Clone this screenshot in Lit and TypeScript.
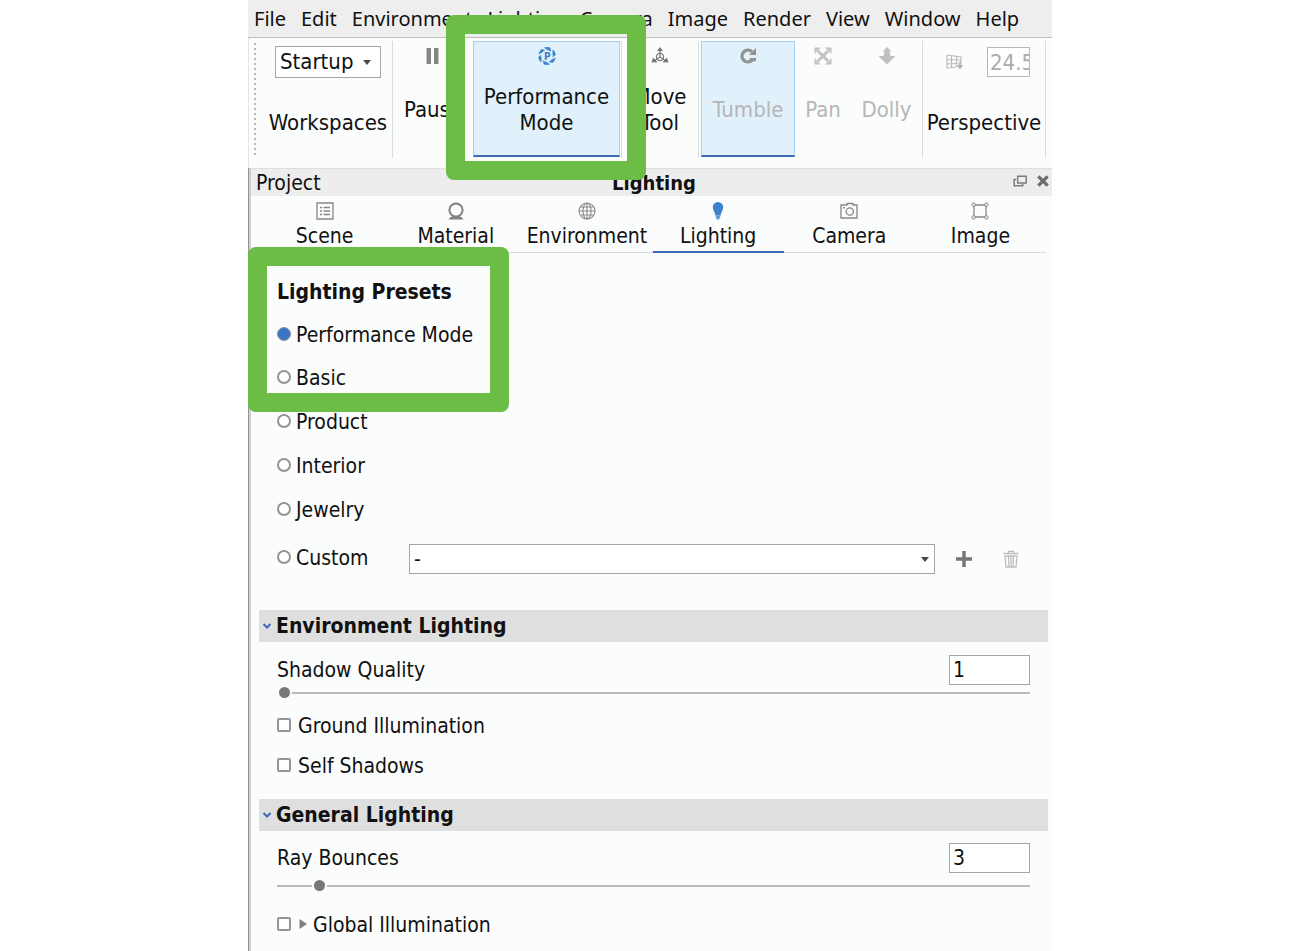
import { LitElement, html, css, svg, nothing } from "lit";
import { customElement, property, state } from "lit/decorators.js";

const icons: Record<string, unknown> = {
  pause: svg`<path d="M2.500 1h4.500v16H2.500zM10 1h4.500v16H10z" fill="#858585"/>`,
  performance: svg`
    ${[0, 60, 120, 180, 240, 300].map(
      (a) => svg`<path transform="rotate(${a} 9 9)" d="M5.960.64A8.900 8.900 0 0 1 12.400.8L13.200 4.900A5.800 5.800 0 0 0 9.700 3.200Z" fill="#3d85cd"/>`
    )}
    <text x="9.200" y="12.500" text-anchor="middle" font-size="10" font-weight="700" fill="#3d7cc6">P</text>`,
  move: svg`<g fill="none" stroke="#777" stroke-width="1.200">
      <circle cx="9" cy="10" r="3.600"/><path d="M9 3v7L3 14M9 10l6 4"/></g>
    <path d="M9 0l3 4H6zM.5 15.500L2 10.500l4.500 4.800zM17.500 15.500L16 10.500l-4.500 4.800z" fill="#777"/>`,
  tumble: svg`<path d="M13 4.700A5.900 5.900 0 1 0 13 13.300" fill="none" stroke="#929292" stroke-width="3.400"/>
    <path d="M17 1v7H10z" fill="#929292"/><path d="M10.500 11H17v3.200h-6z" fill="#929292"/>`,
  pan: svg`<path d="M4 4l10 10M14 4L4 14" stroke="#c4c4c4" stroke-width="3"/>
    <path d="M.5.5h6.500l-6.500 6.500zM17.500.5v6.500L11 .5zM.5 17.500V11L7 17.500zM17.500 17.500H11l6.500-6.500z" fill="#c4c4c4"/>`,
  dolly: svg`<path d="M9 0l4.500 4.500h-2l1 4.500H17.500L9 17.500.5 9H5.500l1-4.500h-2z" fill="#c0c0c0"/>`,
  grid: svg`<path d="M1 2l14 2v6M1 2v13l9-1M5.500 3v11.500M10.500 3.500v10M1 6.500l14 .5M1 11l11-.5" fill="none" stroke="#bbb" stroke-width="1.200"/>
    <path d="M10.500 12h7L14 16.500zM13 9h2v4h-2z" fill="#b5b5b5"/>`,
  float: svg`<path d="M6 3h11v8.500H6z M4 7H1.500v8h11v-2" fill="none" stroke="#7c7c7c" stroke-width="1.900"/>`,
  close: svg`<path d="M3 3l12 12M15 3L3 15" stroke="#6c6c6c" stroke-width="4.200"/>`,
  scene: svg`<path d="M1 1h16v16H1z" fill="none" stroke="#868686" stroke-width="1.300"/>
    <path d="M4 5.500h2M4 9h2M4 12.500h2M7.500 5.500H14M7.500 9H14M7.500 12.500H14" stroke="#868686" stroke-width="1.400"/>`,
  material: svg`<circle cx="9" cy="8" r="6.600" fill="none" stroke="#808080" stroke-width="2"/>
    <path d="M1.500 17.500q1-2.500 4-3.300h7q3 .8 4 3.300z" fill="#808080"/>`,
  environment: svg`<g fill="none" stroke="#8a8a8a" stroke-width="1.100">
    <circle cx="9" cy="9" r="8"/><ellipse cx="9" cy="9" rx="4" ry="8"/>
    <path d="M9 1v16M1 9h16M2.500 5h13M2.500 13h13"/></g>`,
  lighting: svg`<path d="M9 0a5.200 5.200 0 0 1 5.200 5.200c0 3-2.200 4.600-2.600 8.300H6.400C6 9.800 3.800 8.200 3.800 5.200A5.200 5.200 0 0 1 9 0z" fill="#3a80cb"/>
    <path d="M6.400 13.500h5.200L10.300 17.500H7.700z" fill="#5e9ad6"/>`,
  camera: svg`<g fill="none" stroke="#868686" stroke-width="1.300"><path d="M1 3h6V1.500h6V3h4v13H1z"/>
    <circle cx="9.800" cy="9.500" r="3.600"/></g><path d="M3 5h2v1.500H3z" fill="#868686"/>`,
  image: svg`<g fill="none" stroke="#868686" stroke-width="1.300"><path d="M3 3h12v12H3z"/></g>
    <g fill="#f4f4f4" stroke="#868686"><circle cx="2.600" cy="2.600" r="1.700"/><circle cx="15.400" cy="2.600" r="1.700"/>
    <circle cx="2.600" cy="15.400" r="1.700"/><circle cx="15.400" cy="15.400" r="1.700"/></g>`,
  add: svg`<path d="M9 1v16M1 9h16" stroke="#757575" stroke-width="3.400"/>`,
  trash: svg`<g fill="none" stroke="#bdbdbd" stroke-width="1.300"><path d="M1.500 3.500h15M6.500 3V1.300h5V3M3 6h12l-1 11H4zM6.500 6.500l.5 10M9 6.500v10M11.500 6.500l-.5 10"/></g>`,
  arrow: svg`<path d="M5 7h8l-4 5z" fill="#4a4a4a"/>`,
  chevron: svg`<path d="M5.500 7L9 10.500 12.500 7" fill="none" stroke="#3b68c0" stroke-width="2"/>`,
  expand: svg`<path d="M5.500 4l7.500 5-7.500 5z" fill="#808080"/>`,
};

const icon = (name: string) =>
  html`<svg class="icon" viewBox="0 0 18 18" width="18" height="18" aria-hidden="true">${icons[name]}</svg>`;

const base = css`
  * {
    box-sizing: border-box;
  }
  button,
  input,
  select {
    margin: 0;
    font: inherit;
    color: inherit;
    border-radius: 0;
  }
  button {
    padding: 0;
    border: 0;
    background: none;
  }
  .icon {
    display: block;
    flex: none;
  }
  .select {
    display: grid;
    align-items: center;
    background: #fff;
    border: 1px solid #a6a6a6;
  }
  .select select {
    grid-area: 1 / 1;
    width: 100%;
    height: 100%;
    padding: 0 20px 0 4px;
    appearance: none;
    border: 0;
    background: none;
  }
  .select .icon {
    grid-area: 1 / 1;
    justify-self: end;
    pointer-events: none;
  }
  .callout {
    position: absolute;
    z-index: 2;
    border: 19px solid #6bbd45;
    border-radius: 8px;
    pointer-events: none;
  }
`;

@customElement("tool-bar")
class ToolBar extends LitElement {
  static styles = [
    base,
    css`
      :host {
        display: flex;
        height: 130px;
        padding: 3px 0 10px;
        border-left: 1px solid #e4e4e4;
        font-size: 22px;
      }
      .grip {
        width: 2px;
        margin: 2px 0 2px 5px;
        background: repeating-linear-gradient(#b4b4b4 0 2px, transparent 2px 5px);
      }
      .group {
        display: flex;
        border-right: 1px solid #dcdcdc;
      }
      .stack {
        display: flex;
        flex-direction: column;
        align-items: center;
      }
      .fields {
        display: flex;
        align-items: center;
        height: 42px;
        gap: 23px;
      }
      .caption {
        flex: 1;
        display: flex;
        align-items: center;
        padding-top: 4px;
      }
      .workspaces {
        width: 136px;
        padding-left: 8px;
      }
      .startup {
        width: 106px;
        height: 32px;
      }
      .startup .icon {
        margin-right: 4px;
      }
      .tool {
        display: flex;
        flex-direction: column;
        align-items: center;
        height: 116px;
        padding-top: 5px;
        border: 1px solid transparent;
        border-bottom: 2px solid transparent;
      }
      .tool span {
        flex: 1;
        display: flex;
        align-items: center;
        justify-content: center;
      }
      .tool.on {
        background: #e0f1fc;
        border-color: #a5d0f0;
        border-bottom-color: #3f69b5;
      }
      .tool:disabled {
        color: #b6b6b6;
      }
      .pause {
        width: 80px;
      }
      .marked {
        position: relative;
        padding-right: 1px;
      }
      .marked .callout {
        inset: -26px -25px -22px -27px;
      }
      .performance {
        width: 147px;
      }
      .move {
        width: 76px;
      }
      .camera {
        padding-left: 2px;
      }
      .tumble {
        width: 94px;
      }
      .pan {
        width: 56px;
      }
      .dolly {
        width: 71px;
      }
      .perspective {
        width: 122px;
      }
      .perspective .fields {
        padding-left: 8px;
      }
      .angle {
        width: 43px;
        height: 30px;
        padding: 0 0 0 2px;
        border: 1px solid #b8b8b8;
        background: #fff;
        color: #ababab;
      }
    `,
  ];

  render() {
    return html`
      <div class="grip"></div>
      <div class="group">
        <div class="stack workspaces">
          <div class="fields">
            <div class="select startup">
              <select id="workspace"><option>Startup</option></select>
              ${icon("arrow")}
            </div>
          </div>
          <label class="caption" for="workspace">Workspaces</label>
        </div>
      </div>
      <button class="tool pause">${icon("pause")}<span>Pause</span></button>
      <div class="group marked">
        <button class="tool on performance" aria-pressed="true">
          ${icon("performance")}<span>Performance<br />Mode</span>
        </button>
        <div class="callout"></div>
      </div>
      <div class="group">
        <button class="tool move">${icon("move")}<span>Move<br />Tool</span></button>
      </div>
      <div class="group camera">
        <button class="tool on tumble" disabled>${icon("tumble")}<span>Tumble</span></button>
        <button class="tool pan" disabled>${icon("pan")}<span>Pan</span></button>
        <button class="tool dolly" disabled>${icon("dolly")}<span>Dolly</span></button>
      </div>
      <div class="group">
        <div class="stack perspective">
          <div class="fields">
            ${icon("grid")}
            <input class="angle" id="angle" value="24.5" disabled />
          </div>
          <label class="caption" for="angle">Perspective</label>
        </div>
      </div>
    `;
  }
}

@customElement("slider-field")
class SliderField extends LitElement {
  @property() label = "";
  @property({ type: Number }) value = 0;
  @property({ type: Number }) min = 0;
  @property({ type: Number }) max = 100;

  static styles = [
    base,
    css`
      :host {
        display: flex;
        flex-direction: column;
        gap: var(--slider-gap, 0px);
      }
      .row {
        display: flex;
        justify-content: space-between;
        align-items: center;
      }
      .number {
        width: 81px;
        height: 30px;
        padding: 0 3px;
        border: 1px solid #a6a6a6;
        background: #fff;
      }
      .range {
        display: block;
        width: 100%;
        height: 15px;
        appearance: none;
        background: linear-gradient(#bababa, #bababa) center / 100% 2px no-repeat;
      }
      .range::-webkit-slider-thumb {
        appearance: none;
        box-sizing: border-box;
        width: 15px;
        height: 15px;
        border: 2px solid #fbfcfc;
        border-radius: 50%;
        background: #777;
      }
    `,
  ];

  private changeValue = (e: Event) => {
    this.value = Number((e.target as HTMLInputElement).value);
  };

  render() {
    return html`
      <div class="row">
        <label for="number">${this.label}</label>
        <input class="number" id="number" .value=${String(this.value)} @change=${this.changeValue} />
      </div>
      <input
        class="range"
        type="range"
        aria-label=${this.label}
        min=${this.min}
        max=${this.max}
        .value=${String(this.value)}
        @input=${this.changeValue}
      />
    `;
  }
}

@customElement("lighting-panel")
class LightingPanel extends LitElement {
  @state() private preset = "Performance Mode";

  static styles = [
    base,
    css`
      :host {
        display: block;
        padding: 25px 4px 0 10px;
      }
      .body {
        padding: 0 18px;
      }
      .presets {
        display: flex;
        flex-direction: column;
        gap: 16px;
        padding-bottom: 36px;
      }
      .marked {
        position: relative;
        display: flex;
        flex-direction: column;
        gap: 15px;
      }
      .marked .callout {
        top: -31px;
        bottom: -20px;
        left: -29px;
        width: 261px;
      }
      h2 {
        margin: 0;
        font-size: inherit;
        line-height: 28px;
      }
      .choice {
        display: flex;
        align-items: center;
        gap: 5px;
        min-height: 28px;
      }
      .choice input {
        width: 14px;
        height: 14px;
        margin-bottom: 3px;
        appearance: none;
        border: 2px solid #949494;
        background: #fff;
      }
      .choice input[type="radio"] {
        border-radius: 50%;
      }
      .choice input[type="radio"]:checked {
        border-width: 1px;
        background: #3b76c4;
      }
      .check {
        gap: 7px;
      }
      .choice input[type="checkbox"] {
        border-radius: 2px;
      }
      .custom {
        display: flex;
        align-items: center;
        padding-top: 4px;
      }
      .custom .choice {
        align-self: flex-start;
        width: 132px;
      }
      .custom .select {
        flex: 1;
        height: 30px;
      }
      .action {
        margin-left: 20px;
      }
      .action + .action {
        margin-left: 29px;
      }
      .action:last-child {
        margin-right: 10px;
      }
      .section {
        display: flex;
        align-items: center;
        width: 100%;
        height: 32px;
        background: #dfdfdf;
        font-weight: 700;
      }
      .section .icon {
        margin-left: -1px;
      }
      .environment {
        display: flex;
        flex-direction: column;
        gap: 12px;
        padding-top: 13px;
        padding-bottom: 19px;
      }
      .general {
        --slider-gap: 5px;
        display: flex;
        flex-direction: column;
        gap: 18px;
        padding-top: 12px;
      }
      .global {
        display: flex;
        align-items: center;
      }
      .global .choice {
        gap: 4px;
      }
      .global .icon {
        margin: 0 -3px 2px -1px;
      }
    `,
  ];

  private radio(name: string) {
    return html`<label class="choice">
      <input
        type="radio"
        name="preset"
        .checked=${this.preset === name}
        @change=${() => (this.preset = name)}
      />${name}
    </label>`;
  }

  private check(name: string, lead: unknown = nothing) {
    return html`<label class="choice check"><input type="checkbox" />${lead}${name}</label>`;
  }

  render() {
    return html`
      <div class="body presets">
        <div class="marked">
          <h2>Lighting Presets</h2>
          ${this.radio("Performance Mode")} ${this.radio("Basic")}
          <div class="callout"></div>
        </div>
        ${["Product", "Interior", "Jewelry"].map((name) => this.radio(name))}
        <div class="custom">
          ${this.radio("Custom")}
          <div class="select">
            <select aria-label="Custom preset"><option>-</option></select>
            ${icon("arrow")}
          </div>
          <button class="action" aria-label="Add preset">${icon("add")}</button>
          <button class="action" aria-label="Delete preset" disabled>${icon("trash")}</button>
        </div>
      </div>

      <button class="section">${icon("chevron")}Environment Lighting</button>
      <div class="body environment">
        <slider-field label="Shadow Quality" .min=${1} .max=${10} .value=${1}></slider-field>
        ${this.check("Ground Illumination")} ${this.check("Self Shadows")}
      </div>

      <button class="section">${icon("chevron")}General Lighting</button>
      <div class="body general">
        <slider-field label="Ray Bounces" .min=${0} .max=${64} .value=${3}></slider-field>
        <div class="global">${this.check("Global Illumination", icon("expand"))}</div>
      </div>
    `;
  }
}

@customElement("app-root")
class AppRoot extends LitElement {
  static styles = [
    base,
    css`
      :host {
        display: flow-root;
        min-height: 100vh;
        background: #fff;
        color: #111;
        font: 21px/26px "DejaVu Sans Condensed", "Noto Sans", sans-serif;
      }
      .window {
        display: flex;
        flex-direction: column;
        max-width: 804px;
        min-height: 100vh;
        margin: 0 auto;
        background: #fbfcfc;
      }
      .menu {
        display: flex;
        align-items: center;
        gap: 15px;
        height: 38px;
        padding: 0 6px;
        background: #eee;
        border-bottom: 1px solid #bdbdbd;
        font-family: "Noto Sans", sans-serif;
        font-size: 20px;
      }
      .dock {
        flex: 1;
        border-left: 1px solid #949494;
        box-shadow: inset 2px 0 #d0d0d0;
      }
      .title {
        display: grid;
        grid-template-columns: 1fr auto 1fr;
        align-items: center;
        height: 28px;
        margin-left: 2px;
        padding-left: 5px;
        background: #ededed;
        border-top: 1px solid #dedede;
      }
      .title b {
        font-size: 20px;
      }
      .buttons {
        display: flex;
        justify-content: flex-end;
        gap: 9px;
        padding: 0 2px 3px 0;
      }
      .buttons .icon {
        width: 14px;
        height: 14px;
      }
      .tabs {
        display: flex;
        height: 57px;
        margin: 0 6px 0 10px;
        border-bottom: 1px solid #d9d9d9;
      }
      .tab {
        flex: 1 1 0;
        display: flex;
        flex-direction: column;
        align-items: center;
        gap: 3px;
        min-width: 0;
        height: 57px;
        padding-top: 6px;
        border-bottom: 2px solid transparent;
        white-space: nowrap;
      }
      .tab.on {
        border-bottom-color: #3e66ba;
      }
    `,
  ];

  render() {
    const menu = ["File", "Edit", "Environment", "Lighting", "Camera", "Image", "Render", "View", "Window", "Help"];
    const tabs = ["Scene", "Material", "Environment", "Lighting", "Camera", "Image"];
    return html`
      <div class="window">
        <nav class="menu">${menu.map((name) => html`<button>${name}</button>`)}</nav>
        <tool-bar></tool-bar>
        <div class="dock">
          <div class="title">
            <span>Project</span><b>Lighting</b>
            <div class="buttons">
              <button aria-label="Float panel">${icon("float")}</button>
              <button aria-label="Close panel">${icon("close")}</button>
            </div>
          </div>
          <div class="tabs" role="tablist">
            ${tabs.map(
              (name) => html`<button
                class="tab ${name === "Lighting" ? "on" : ""}"
                role="tab"
                aria-selected=${name === "Lighting"}
              >
                ${icon(name.toLowerCase())}<span>${name}</span>
              </button>`
            )}
          </div>
          <lighting-panel></lighting-panel>
        </div>
      </div>
    `;
  }
}
